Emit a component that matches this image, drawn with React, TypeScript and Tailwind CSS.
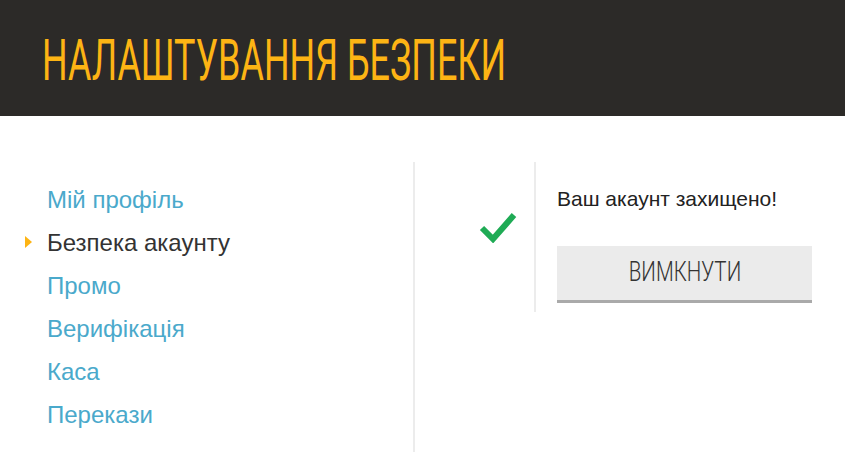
import React from 'react';

const navItems = ['Мій профіль', 'Безпека акаунту', 'Промо', 'Верифікація', 'Каса', 'Перекази'];
const activeItem = 'Безпека акаунту';

const CheckIcon: React.FC = () => (
  <svg width="38" height="32" viewBox="0 0 38 32" className="text-[#1fab55]">
    <path d="M3 17 L14 28 L35 4" fill="none" stroke="currentColor" strokeWidth="6" strokeLinejoin="miter" />
  </svg>
);

const App: React.FC = () => {
  return (
    <div className="w-[845px] h-[461px] bg-white overflow-hidden font-['Liberation_Sans',Arial,sans-serif]">
      <header className="h-[116px] bg-[#2c2a28] flex items-center pl-[42px]">
        <h1 className="font-['Roboto',sans-serif] text-[57px] leading-none text-[#fdb414] whitespace-nowrap origin-left scale-x-[0.63] pt-[4px]">
          НАЛАШТУВАННЯ БЕЗПЕКИ
        </h1>
      </header>

      <div className="flex pt-[46px]">
        <nav className="w-[415px] h-[290px] border-r-2 border-[#ececec] pt-[16px]">
          <ul className="flex flex-col">
            {navItems.map((item) => (
              <li key={item} className="relative h-[43px] flex items-center pl-[47px]">
                {item === activeItem && (
                  <span className="absolute left-[25px] top-[15px] w-0 h-0 border-y-[6px] border-y-transparent border-l-[7px] border-l-[#fdb414]" />
                )}
                <span className={`text-[24px] ${item === activeItem ? 'text-[#333]' : 'text-[#4aa9cb]'}`}>{item}</span>
              </li>
            ))}
          </ul>
        </nav>

        <div className="w-[121px] h-[150px] border-r-2 border-[#ececec] flex justify-end pr-[17px] pt-[49px]">
          <CheckIcon />
        </div>

        <div className="pl-[21px] pt-[21px]">
          <p className="text-[21px] text-[#222]">Ваш акаунт захищено!</p>
          <button className="mt-[31px] w-[255px] h-[57px] bg-[#ebebeb] border-b-[3px] border-[#aaaaaa] flex items-center justify-center">
            <span className="inline-block font-['Roboto',sans-serif] font-light text-[27px] leading-none text-[#333] scale-x-[0.76]">ВИМКНУТИ</span>
          </button>
        </div>
      </div>
    </div>
  );
};

export default App;
